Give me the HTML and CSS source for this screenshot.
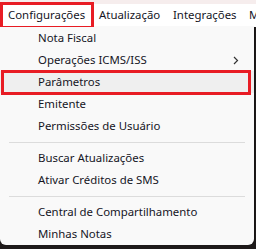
FILE: index.html
```html
<!DOCTYPE html>
<html lang="pt-BR">
<head>
<meta charset="utf-8">
<link rel="stylesheet" href="styles.css">
</head>
<body>
<div class="screen">
  <nav class="menubar">
    <span class="top-item active">Configurações</span>
    <span class="top-item">Atualização</span>
    <span class="top-item">Integrações</span>
    <span class="top-item">M</span>
  </nav>
  <div class="dropdown">
    <div class="item">Nota Fiscal</div>
    <div class="item sub">Operações ICMS/ISS
      <svg class="chev" width="6" height="9" viewBox="0 0 6 9"><path d="M1 1 L4.5 4.5 L1 8" fill="none" stroke="#333" stroke-width="1.2"/></svg>
    </div>
    <div class="item marked">Parâmetros</div>
    <div class="item">Emitente</div>
    <div class="item">Permissões de Usuário</div>
    <div class="sep"></div>
    <div class="item">Buscar Atualizações</div>
    <div class="item">Ativar Créditos de SMS</div>
    <div class="sep"></div>
    <div class="item">Central de Compartilhamento</div>
    <div class="item">Minhas Notas</div>
  </div>
</div>
</body>
</html>
```
FILE: styles.css
```css
html, body {
  margin: 0;
  padding: 0;
}
body {
  width: 256px;
  height: 249px;
  overflow: hidden;
  background: #1e1a1a;
  font-family: "Noto Sans", "Open Sans", sans-serif;
  font-size: 11.4px;
  color: #15151f;
}
.screen {
  display: flex;
  flex-direction: column;
}
.menubar {
  height: 27px;
  display: flex;
  align-items: center;
  overflow: hidden;
  white-space: nowrap;
  background: linear-gradient(#f6eded 0, #f6eded 4px, #ffffff 4px);
}
.top-item {
  flex: none;
  line-height: 20px;
  margin-top: 3px;
}
.top-item:nth-child(1) { width: 91px; padding-left: 8px; }
.top-item:nth-child(2) { width: 74px; }
.top-item:nth-child(3) { width: 76px; }
.top-item.active {
  position: relative;
}
.top-item.active::after {
  content: "";
  position: absolute;
  left: 0;
  top: -3px;
  width: 94px;
  height: 27px;
  box-sizing: border-box;
  border: 3.5px solid #e81c24;
}
.dropdown {
  width: 254px;
  background: #f9f9f9;
  border-radius: 0 0 6px 6px;
  box-shadow: 1px 0 1px rgba(0,0,0,0.25);
  display: flex;
  flex-direction: column;
}
.item {
  height: 22px;
  line-height: 22px;
  padding-left: 38px;
  position: relative;
  display: flex;
  align-items: center;
}
.item.sub {
  justify-content: space-between;
  padding-right: 15px;
}
.chev {
  display: block;
}
.item.marked {
  background: #efefef;
}
.item.marked::after {
  content: "";
  position: absolute;
  left: 1px;
  top: -1px;
  width: 250px;
  height: 25px;
  box-sizing: border-box;
  border: 3.5px solid #e81c24;
}
.sep {
  height: 10px;
  display: flex;
  align-items: center;
  padding: 0 9px;
}
.sep::before {
  content: "";
  flex: 1;
  height: 1px;
  background: #dcdcdc;
}
```
